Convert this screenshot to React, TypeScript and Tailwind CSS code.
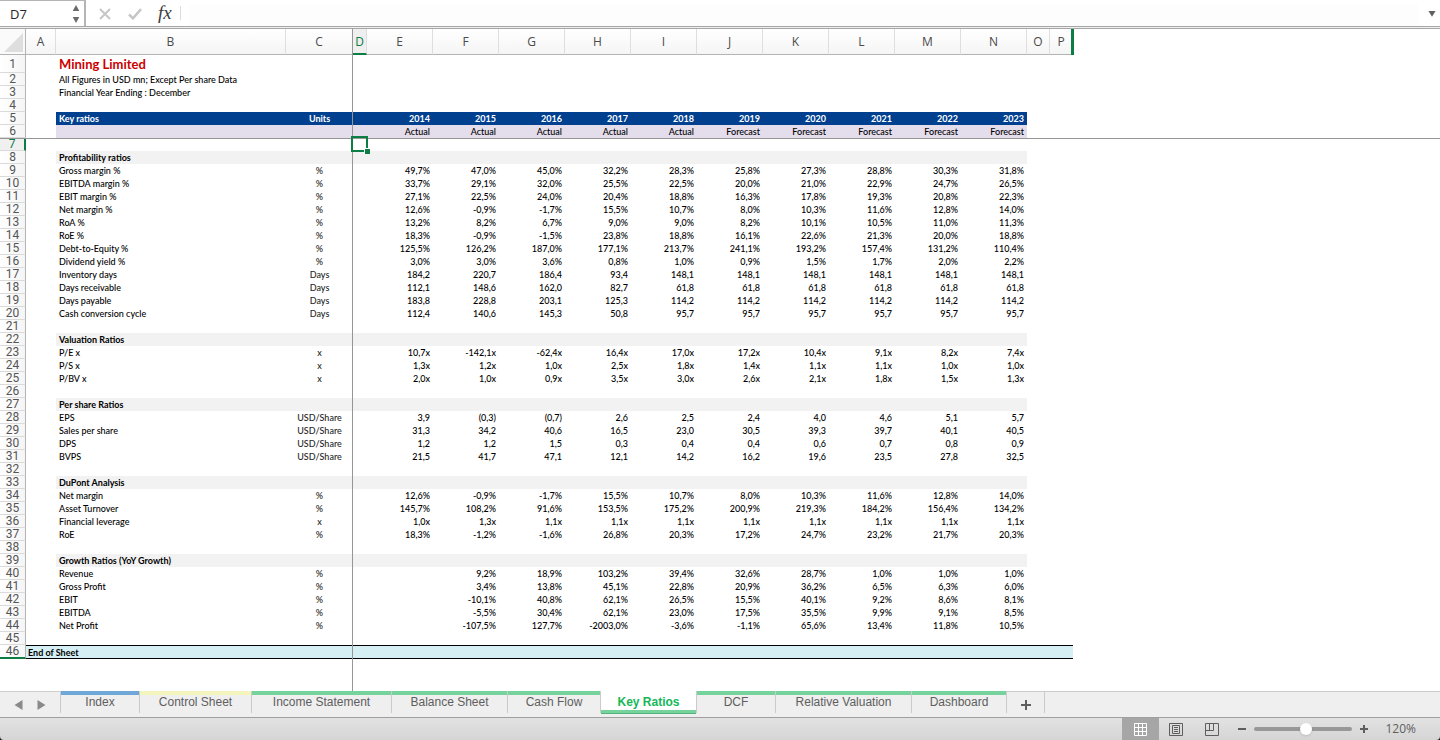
import React, { useState } from 'react';
import clsx from 'clsx';

interface SheetRow {
  kind: 'blank' | 'title' | 'note' | 'years' | 'status' | 'section' | 'data' | 'end';
  label?: string;
  unit?: string;
  values?: string[];
}

const COLUMNS = ['A', 'B', 'C', 'D', 'E', 'F', 'G', 'H', 'I', 'J', 'K', 'L', 'M', 'N', 'O', 'P'];

const blank: SheetRow = { kind: 'blank' };
const section = (label: string): SheetRow => ({ kind: 'section', label });
const data = (label: string, unit: string, values: string): SheetRow => ({
  kind: 'data',
  label,
  unit,
  values: values.split(' ').map((v) => (v === '.' ? '' : v)),
});

const ROWS: SheetRow[] = [
  { kind: 'title', label: 'Mining Limited' },
  { kind: 'note', label: 'All Figures in USD mn; Except Per share Data' },
  { kind: 'note', label: 'Financial Year Ending : December' },
  blank,
  {
    kind: 'years',
    label: 'Key ratios',
    unit: 'Units',
    values: ['2014', '2015', '2016', '2017', '2018', '2019', '2020', '2021', '2022', '2023'],
  },
  {
    kind: 'status',
    values: ['Actual', 'Actual', 'Actual', 'Actual', 'Actual', 'Forecast', 'Forecast', 'Forecast', 'Forecast', 'Forecast'],
  },
  blank,
  section('Profitability ratios'),
  data('Gross margin %', '%', '49,7% 47,0% 45,0% 32,2% 28,3% 25,8% 27,3% 28,8% 30,3% 31,8%'),
  data('EBITDA margin %', '%', '33,7% 29,1% 32,0% 25,5% 22,5% 20,0% 21,0% 22,9% 24,7% 26,5%'),
  data('EBIT margin %', '%', '27,1% 22,5% 24,0% 20,4% 18,8% 16,3% 17,8% 19,3% 20,8% 22,3%'),
  data('Net margin %', '%', '12,6% -0,9% -1,7% 15,5% 10,7% 8,0% 10,3% 11,6% 12,8% 14,0%'),
  data('RoA %', '%', '13,2% 8,2% 6,7% 9,0% 9,0% 8,2% 10,1% 10,5% 11,0% 11,3%'),
  data('RoE %', '%', '18,3% -0,9% -1,5% 23,8% 18,8% 16,1% 22,6% 21,3% 20,0% 18,8%'),
  data('Debt-to-Equity %', '%', '125,5% 126,2% 187,0% 177,1% 213,7% 241,1% 193,2% 157,4% 131,2% 110,4%'),
  data('Dividend yield %', '%', '3,0% 3,0% 3,6% 0,8% 1,0% 0,9% 1,5% 1,7% 2,0% 2,2%'),
  data('Inventory days', 'Days', '184,2 220,7 186,4 93,4 148,1 148,1 148,1 148,1 148,1 148,1'),
  data('Days receivable', 'Days', '112,1 148,6 162,0 82,7 61,8 61,8 61,8 61,8 61,8 61,8'),
  data('Days payable', 'Days', '183,8 228,8 203,1 125,3 114,2 114,2 114,2 114,2 114,2 114,2'),
  data('Cash conversion cycle', 'Days', '112,4 140,6 145,3 50,8 95,7 95,7 95,7 95,7 95,7 95,7'),
  blank,
  section('Valuation Ratios'),
  data('P/E x', 'x', '10,7x -142,1x -62,4x 16,4x 17,0x 17,2x 10,4x 9,1x 8,2x 7,4x'),
  data('P/S x', 'x', '1,3x 1,2x 1,0x 2,5x 1,8x 1,4x 1,1x 1,1x 1,0x 1,0x'),
  data('P/BV x', 'x', '2,0x 1,0x 0,9x 3,5x 3,0x 2,6x 2,1x 1,8x 1,5x 1,3x'),
  blank,
  section('Per share Ratios'),
  data('EPS', 'USD/Share', '3,9 (0,3) (0,7) 2,6 2,5 2,4 4,0 4,6 5,1 5,7'),
  data('Sales per share', 'USD/Share', '31,3 34,2 40,6 16,5 23,0 30,5 39,3 39,7 40,1 40,5'),
  data('DPS', 'USD/Share', '1,2 1,2 1,5 0,3 0,4 0,4 0,6 0,7 0,8 0,9'),
  data('BVPS', 'USD/Share', '21,5 41,7 47,1 12,1 14,2 16,2 19,6 23,5 27,8 32,5'),
  blank,
  section('DuPont Analysis'),
  data('Net margin', '%', '12,6% -0,9% -1,7% 15,5% 10,7% 8,0% 10,3% 11,6% 12,8% 14,0%'),
  data('Asset Turnover', '%', '145,7% 108,2% 91,6% 153,5% 175,2% 200,9% 219,3% 184,2% 156,4% 134,2%'),
  data('Financial leverage', 'x', '1,0x 1,3x 1,1x 1,1x 1,1x 1,1x 1,1x 1,1x 1,1x 1,1x'),
  data('RoE', '%', '18,3% -1,2% -1,6% 26,8% 20,3% 17,2% 24,7% 23,2% 21,7% 20,3%'),
  blank,
  section('Growth Ratios (YoY Growth)'),
  data('Revenue', '%', '. 9,2% 18,9% 103,2% 39,4% 32,6% 28,7% 1,0% 1,0% 1,0%'),
  data('Gross Profit', '%', '. 3,4% 13,8% 45,1% 22,8% 20,9% 36,2% 6,5% 6,3% 6,0%'),
  data('EBIT', '%', '. -10,1% 40,8% 62,1% 26,5% 15,5% 40,1% 9,2% 8,6% 8,1%'),
  data('EBITDA', '%', '. -5,5% 30,4% 62,1% 23,0% 17,5% 35,5% 9,9% 9,1% 8,5%'),
  data('Net Profit', '%', '. -107,5% 127,7% -2003,0% -3,6% -1,1% 65,6% 13,4% 11,8% 10,5%'),
  blank,
  { kind: 'end', label: 'End of Sheet' },
];

const TABS = [
  { name: 'Index', width: 'w-[79px]', color: 'bg-[#6fa8d8]' },
  { name: 'Control Sheet', width: 'w-[112px]', color: 'bg-[#f3f5bd]' },
  { name: 'Income Statement', width: 'w-[140px]', color: 'bg-[#76d39b]' },
  { name: 'Balance Sheet', width: 'w-[116px]', color: 'bg-[#76d39b]' },
  { name: 'Cash Flow', width: 'w-[93px]', color: 'bg-[#76d39b]' },
  { name: 'Key Ratios', width: 'w-[96px]', color: 'bg-[#76d39b]' },
  { name: 'DCF', width: 'w-[79px]', color: 'bg-[#76d39b]' },
  { name: 'Relative Valuation', width: 'w-[136px]', color: 'bg-[#76d39b]' },
  { name: 'Dashboard', width: 'w-[95px]', color: 'bg-[#76d39b]' },
];

const FormulaBar: React.FC = () => (
  <div className="flex h-[29px] shrink-0 flex-col">
    <div className="flex h-[26px] items-stretch bg-white">
      <div className="flex w-[86px] items-center justify-between border-t border-r-2 border-[#b5b5b5] pr-1">
        <input
          aria-label="Name Box"
          defaultValue="D7"
          className="w-14 bg-transparent pl-[10px] text-[13px] leading-5 text-[#262626] outline-none"
        />
        <button aria-label="Previous names">
          <svg width="8" height="20" viewBox="0 0 8 20" fill="#6b6b6b">
            <path d="M4 1l3.300 6H.7zM4 19l3.300-6H.7z" />
          </svg>
        </button>
      </div>
      <button aria-label="Cancel" className="ml-[13px] pt-[2px]">
        <svg width="12" height="12" viewBox="0 0 12 12" fill="none" stroke="#c6c6c6" strokeWidth="2">
          <path d="M1 1l10 10M11 1L1 11" />
        </svg>
      </button>
      <button aria-label="Enter" className="ml-[17px] pt-[2px]">
        <svg width="14" height="12" viewBox="0 0 14 12" fill="none" stroke="#c6c6c6" strokeWidth="2.500">
          <path d="M1 6.500l4 3.800L13 1.200" />
        </svg>
      </button>
      <button
        aria-label="Insert function"
        className="ml-4 pr-2 font-['Liberation_Serif',serif] text-[19px] leading-6 italic text-[#3c3c3c]"
      >
        fx
      </button>
      <div className="my-[6px] w-px bg-[#dcdcdc]" />
      <input aria-label="Formula" className="ml-2 mt-1 min-w-0 flex-1 bg-[#fdfdfd] px-1 text-[13px] outline-none" />
      <button aria-label="Expand formula bar" className="px-1 pl-[10px] pt-[2px]">
        <svg width="8" height="6" viewBox="0 0 8 6" fill="#5f5f5f">
          <path d="M.5 0h7L4 5.800z" />
        </svg>
      </button>
    </div>
    <div className="h-[3px] border-y border-[#a6a6a6] bg-[#f0f0f0]" />
  </div>
);

const rowBackground = (kind: SheetRow['kind']) =>
  clsx(
    kind === 'years' && 'bg-[#00408f] font-bold text-white',
    kind === 'status' && 'bg-[#e4ddec]',
    kind === 'section' && 'bg-[#f2f2f2] font-bold',
  );

const SheetLine: React.FC<{ row: SheetRow; number: number }> = ({ row, number }) => {
  const active = number === 7;
  const fill = rowBackground(row.kind);
  const last = row.kind === 'end';

  return (
    <tr className={row.kind === 'title' ? 'h-[18px]' : 'h-[13px]'}>
      <th
        scope="row"
        className={clsx(
          "border-r border-b p-0 text-center font-['Roboto',sans-serif] text-[12px] leading-3 font-normal",
          active
            ? 'border-r-2 border-r-[#0b7d45] border-b-[#dadada] bg-[#f0f0f0] text-[#0b7d45]'
            : 'border-r-[#b4b4b4] bg-linear-to-r from-white to-[#f5f5f5] text-[#555]',
          !active && (last ? 'border-b-2 border-b-[#0b7d45]' : 'border-b-[#dadada]'),
        )}
      >
        {number}
      </th>
      {last ? (
        <td colSpan={16} className="border-y border-black bg-[#d6eff4] p-0 pl-[2px] leading-[11px] font-bold">
          {row.label}
        </td>
      ) : (
        <>
          <td className="p-0" />
          <td
            className={clsx(
              'p-0 pl-[3px] whitespace-nowrap',
              fill,
              row.kind === 'title' && 'text-[13px] leading-[18px] font-bold text-[#cc0000]',
            )}
          >
            {row.label}
          </td>
          <td className={clsx('p-0 text-center', fill, row.kind === 'data' && 'text-[#262626]')}>{row.unit}</td>
          <td className={clsx('p-0', fill, active && 'relative')}>
            {active && (
              <span className="absolute -top-[2px] -left-[2px] z-20 h-4 w-[17px] border-2 border-[#0b7d45]">
                <span className="absolute -right-1 -bottom-1 size-[6px] border-t border-l border-white bg-[#0b7d45]" />
              </span>
            )}
          </td>
          {COLUMNS.slice(4, 14).map((column, i) => (
            <td key={column} className={clsx('p-0 pr-[3px] text-right', fill)}>
              {row.values?.[i]}
            </td>
          ))}
          <td className="p-0" />
          <td className="p-0" />
        </>
      )}
    </tr>
  );
};

const Sheet: React.FC = () => (
  <main className="relative flex-1 overflow-hidden bg-white">
    <table className="w-[1073px] table-fixed border-separate border-spacing-0 font-['Lato','Noto_Sans',sans-serif] text-[9px] leading-[13px] font-medium text-black">
      <colgroup>
        <col className="w-[26px]" />
        <col className="w-[30px]" />
        <col className="w-[230px]" />
        <col className="w-[67px]" />
        <col className="w-[14px]" />
        {COLUMNS.slice(4, 14).map((column) => (
          <col key={column} className="w-[66px]" />
        ))}
        <col className="w-[23px]" />
        <col className="w-[23px]" />
      </colgroup>
      <thead>
        <tr className="h-[26px]">
          <th className="border-r border-b border-[#b4b4b4] bg-[#fafafa] p-0">
            <svg className="ml-[4px] mt-[2px]" width="20" height="20" viewBox="0 0 20 20" fill="#dedede" aria-label="Select all">
              <path d="M19 0v19H0z" />
            </svg>
          </th>
          {COLUMNS.map((column) => (
            <th
              key={column}
              scope="col"
              className={clsx(
                "relative border-r border-b border-r-[#dedede] p-0 font-['Open_Sans',sans-serif] text-[12px] font-normal",
                column === 'D'
                  ? 'border-b-2 border-b-[#0b7d45] bg-[#efefef] text-[#0b7d45]'
                  : 'border-b-[#b4b4b4] bg-linear-to-b from-white to-[#f5f5f5] text-[#4a4a4a]',
              )}
            >
              {column}
              {column === 'P' && <span className="absolute top-0 -right-[2px] h-[26px] w-[3px] bg-[#0b7d45]" />}
            </th>
          ))}
        </tr>
      </thead>
      <tbody>
        {ROWS.map((row, i) => (
          <SheetLine key={i} row={row} number={i + 1} />
        ))}
      </tbody>
    </table>
    {/* Freeze pane lines */}
    <div className="absolute inset-y-0 left-[352px] z-10 w-px bg-[#969696]" />
    <div className="absolute inset-x-0 top-[109px] z-10 h-px bg-[#969696]" />
  </main>
);

const SheetTabs: React.FC<{ active: string; onSelect: (name: string) => void }> = ({ active, onSelect }) => (
  <nav className="flex h-[27px] shrink-0 items-start border-b border-[#a0a0a0] bg-[#efefef] font-['Liberation_Sans',sans-serif] text-[12px]">
    <div className="flex w-[60px] items-center gap-[14px] self-stretch border-t border-[#cfcfcf] pl-[14px]">
      <button aria-label="Previous sheet">
        <svg width="9" height="12" viewBox="0 0 9 12" fill="#8a8a8a">
          <path d="M8.500 1v10L.5 6z" />
        </svg>
      </button>
      <button aria-label="Next sheet">
        <svg width="9" height="12" viewBox="0 0 9 12" fill="#8a8a8a">
          <path d="M.5 1v10l8-5z" />
        </svg>
      </button>
    </div>
    <div className="flex h-[22px] border-l border-[#cbcbcb]">
      {TABS.map((tab) => {
        const selected = tab.name === active;
        return (
          <button
            key={tab.name}
            onClick={() => onSelect(tab.name)}
            className={clsx(
              'flex flex-col items-stretch border-r border-[#cbcbcb] text-center whitespace-nowrap',
              tab.width,
              selected ? 'bg-white font-bold text-[#14b858]' : 'text-[#5e5e5e]',
            )}
          >
            {!selected && <span className={clsx('h-1', tab.color)} />}
            <span className={clsx('leading-[14px]', selected && 'pt-1')}>{tab.name}</span>
            {selected && <span className={clsx('mt-px h-1 shrink-0 border-b border-[#55b27d]', tab.color)} />}
          </button>
        );
      })}
    </div>
    <div className="flex h-[22px] flex-1 border-t border-[#cbcbcb]">
      <button aria-label="New sheet" className="flex w-[38px] items-center justify-center border-r border-[#cbcbcb] pt-1">
        <svg width="10" height="10" viewBox="0 0 10 10" stroke="#5e5e5e" strokeWidth="2">
          <path d="M5 0v10M0 5h10" />
        </svg>
      </button>
    </div>
  </nav>
);

const StatusBar: React.FC = () => {
  const [zoom, setZoom] = useState(120);

  return (
    <footer className="flex h-[22px] shrink-0 items-stretch justify-end rounded-b-[4px] bg-linear-to-b from-[#e2e2e2] to-[#d5d5d5] pr-6 text-[#5e5e5e]">
      <button aria-label="Normal view" className="flex w-[37px] items-center justify-center bg-[#a6a6a6]">
        <svg width="13" height="13" viewBox="0 0 13 13" fill="none" stroke="#fff">
          <path d="M.5.5h12v12H.5zM4.500.5v12M8.500.5v12M.5 4.500h12M.5 8.500h12" />
        </svg>
      </button>
      <button aria-label="Page layout" className="flex w-[34px] items-center justify-center">
        <svg width="14" height="13" viewBox="0 0 14 13" fill="none" stroke="currentColor">
          <path d="M.5.5h13v12H.5zM3.500 2.500h7v8h-7zM5 4.500h4M5 6.500h4M5 8.500h4" />
        </svg>
      </button>
      <button aria-label="Page break preview" className="flex w-[38px] items-center justify-center">
        <svg width="14" height="13" viewBox="0 0 14 13" fill="none" stroke="currentColor">
          <path d="M.5.5h13v12H.5zM.5 7.500h8v-7M4.500.5v7" />
        </svg>
      </button>
      <button aria-label="Zoom out" className="ml-[7px]" onClick={() => setZoom(zoom - 10)}>
        <svg width="8" height="8" viewBox="0 0 8 8" stroke="currentColor" strokeWidth="2">
          <path d="M0 4h8" />
        </svg>
      </button>
      <input
        type="range"
        aria-label="Zoom"
        min={15}
        max={215}
        value={zoom}
        onChange={(e) => setZoom(Number(e.target.value))}
        className="mx-2 my-auto h-1 w-[98px] appearance-none rounded-full bg-[#989898] [&::-webkit-slider-thumb]:size-3 [&::-webkit-slider-thumb]:appearance-none [&::-webkit-slider-thumb]:rounded-full [&::-webkit-slider-thumb]:bg-white [&::-webkit-slider-thumb]:shadow-sm"
      />
      <button aria-label="Zoom in" onClick={() => setZoom(zoom + 10)}>
        <svg width="8" height="8" viewBox="0 0 8 8" stroke="currentColor" strokeWidth="2">
          <path d="M0 4h8M4 0v8" />
        </svg>
      </button>
      <output className="ml-[17px] font-['Open_Sans',sans-serif] text-[12px] leading-[22px]">{zoom}%</output>
    </footer>
  );
};

const App: React.FC = () => {
  const [activeTab, setActiveTab] = useState('Key Ratios');

  return (
    <div className="flex min-h-screen flex-col bg-[#222] font-['Open_Sans','Noto_Sans',sans-serif]">
      <FormulaBar />
      <Sheet />
      <SheetTabs active={activeTab} onSelect={setActiveTab} />
      <StatusBar />
    </div>
  );
};

export default App;
